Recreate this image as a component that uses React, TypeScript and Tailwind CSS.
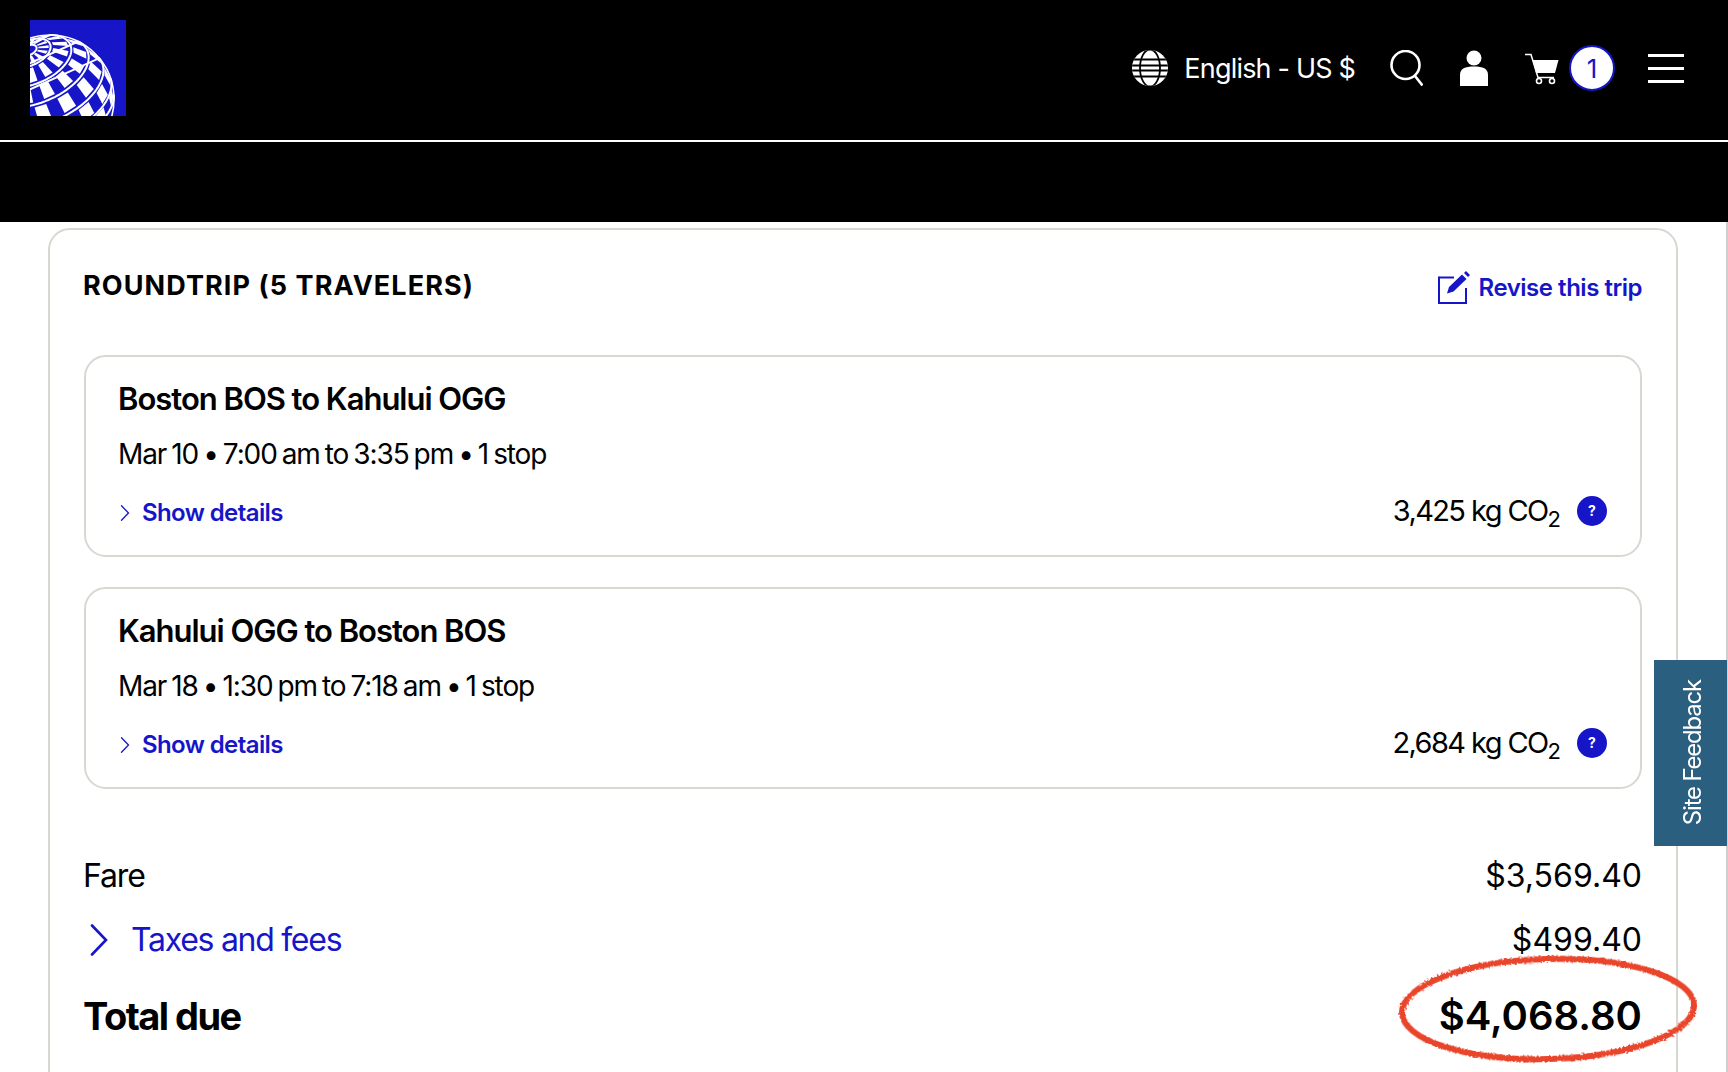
import type { ReactNode } from "react";

const FONT = "font-['Inter','Liberation_Sans',sans-serif]";

// The globe mark: an orthographic grid seen from a tilted pole, clipped by the square.
const CX = 20;
const CY = 79;
const R = 64;
const POLE: [number, number, number] = [-22 / 64, -49 / 64, Math.sqrt(1 - (22 * 22 + 49 * 49) / (64 * 64))];
const U: [number, number, number] = [0.912, -0.41, 0];
const V: [number, number, number] = [
  POLE[1] * U[2] - POLE[2] * U[1],
  POLE[2] * U[0] - POLE[0] * U[2],
  POLE[0] * U[1] - POLE[1] * U[0],
];

function project(theta: number, phi: number) {
  const s = Math.sin(theta);
  const c = Math.cos(theta);
  const x = c * POLE[0] + s * (Math.cos(phi) * U[0] + Math.sin(phi) * V[0]);
  const y = c * POLE[1] + s * (Math.cos(phi) * U[1] + Math.sin(phi) * V[1]);
  const z = c * POLE[2] + s * (Math.cos(phi) * U[2] + Math.sin(phi) * V[2]);
  return { x: CX + x * R, y: CY + y * R, z };
}

const RINGS = [0.14, 0.36, 0.69, 1.0, 1.34, 1.64, 1.86];
const SEGMENTS = 28;

const cells: string[] = [];
RINGS.slice(0, -1).forEach((top, i) => {
  const gap = (RINGS[i + 1] - top) * 0.13;
  for (let j = 0; j < SEGMENTS; j++) {
    if ((i + j) % 2) continue;
    const a = (j / SEGMENTS) * Math.PI * 2 + 0.1;
    const b = ((j + 1) / SEGMENTS) * Math.PI * 2 + 0.1;
    const pts = [
      project(top + gap, a),
      project(top + gap, b),
      project(RINGS[i + 1] - gap, b),
      project(RINGS[i + 1] - gap, a),
    ];
    if (pts.some((p) => p.z < 0)) continue;
    cells.push(pts.map((p) => `${p.x.toFixed(1)},${p.y.toFixed(1)}`).join(" "));
  }
});

const rings = RINGS.map((theta) => {
  const pts: string[] = [];
  for (let k = 0; k <= 180; k++) {
    const p = project(theta, (k / 180) * Math.PI * 2);
    if (p.z >= 0) pts.push(`${p.x.toFixed(1)},${p.y.toFixed(1)}`);
  }
  return pts.join(" ");
});

function Logo() {
  return (
    <svg viewBox="0 0 96 96" className="h-24 w-24 shrink-0 bg-[#1616c8]">
      <g fill="#fff">
        {cells.map((c) => (
          <polygon key={c} points={c} />
        ))}
      </g>
      <g fill="none" stroke="#fff" strokeWidth="2">
        {rings.map((r) => (
          <polyline key={r} points={r} />
        ))}
        <circle cx={CX} cy={CY} r={R} strokeWidth="1.6" />
      </g>
    </svg>
  );
}

function GlobeIcon() {
  return (
    <svg viewBox="0 0 36 36" className="h-9 w-9 shrink-0">
      <defs>
        <clipPath id="globe-clip">
          <circle cx="18" cy="18" r="18" />
        </clipPath>
      </defs>
      <g clipPath="url(#globe-clip)">
        <rect x="0" y="0" width="36" height="36" fill="#fff" />
        <path d="M0 9.500h36M0 15.500h36M0 20.500h36M0 26.500h36" stroke="#000" strokeWidth="2" />
        <ellipse cx="18" cy="18" rx="10" ry="18.500" fill="none" stroke="#000" strokeWidth="1.8" />
      </g>
    </svg>
  );
}

function SearchIcon() {
  return (
    <svg viewBox="0 0 33 36" className="h-9 w-[33px] shrink-0" fill="none" stroke="#fff" strokeWidth="2.6">
      <circle cx="15.500" cy="15" r="14" />
      <path d="M25 26l7.500 9.500" />
    </svg>
  );
}

function UserIcon() {
  return (
    <svg viewBox="0 0 28 36" className="h-9 w-7 shrink-0" fill="#fff">
      <circle cx="14" cy="8" r="7.500" />
      <path d="M0 36V25c0-6.500 5-8.500 14-8.500S28 18.500 28 25v11z" />
    </svg>
  );
}

function CartIcon() {
  return (
    <svg viewBox="0 0 35 36" className="h-9 w-[35px] shrink-0">
      <path d="M1 4.500h6L14 27.500h16" fill="none" stroke="#fff" strokeWidth="1.500" />
      <path d="M8.500 10H34.500l-3.500 13H12z" fill="#fff" />
      <circle cx="15" cy="31" r="2.500" fill="none" stroke="#fff" strokeWidth="1.600" />
      <circle cx="28" cy="31" r="2.500" fill="none" stroke="#fff" strokeWidth="1.600" />
    </svg>
  );
}

function EditIcon() {
  return (
    <svg viewBox="0 0 32 33" className="h-[33px] w-8 shrink-0 text-[#1616c8]" fill="currentColor">
      <path d="M1.500 6.500h14.500" fill="none" stroke="currentColor" strokeWidth="2" />
      <path d="M1 5.500V32h27V17" fill="none" stroke="currentColor" strokeWidth="2" />
      <path d="M11 16L24 3.500l4.500 4.500L15.500 20.500l-6.500 2z" />
      <path d="M26 2l2-2 4 4-2 2z" />
    </svg>
  );
}

function Chevron({ className }: { className: string }) {
  return (
    <svg viewBox="0 0 18 32" className={className} fill="none" stroke="currentColor" strokeWidth="2.600" strokeLinecap="round">
      <path d="M2 1.500L16 16 2 30.500" />
    </svg>
  );
}

function HelpBadge() {
  return (
    <span className="flex h-[30px] w-[30px] items-center justify-center rounded-full bg-[#1616c8] text-sm font-bold text-white">
      ?
    </span>
  );
}

function Co2({ value }: { value: string }) {
  return (
    <div className="-mt-[2px] flex items-center gap-[16px]">
      <span className="text-[29px] leading-[36px] tracking-[-0.055em] text-black">
        {value} kg CO<sub className="text-[22px] leading-none tracking-normal">2</sub>
      </span>
      <HelpBadge />
    </div>
  );
}

function FlightCard({ title, when, co2 }: { title: string; when: string; co2: string }) {
  return (
    <div className="rounded-[22px] border-2 border-[#d8d8d2] pt-[23px] pr-[33px] pb-[24px] pl-[32px]">
      <h3 className="text-[31px] leading-[38px] font-semibold tracking-[-0.033em] text-black">{title}</h3>
      <p className="mt-[18px] text-[28px] leading-[36px] tracking-[-0.04em] [word-spacing:-0.06em] text-black">{when}</p>
      <div className="mt-[23px] flex h-9 items-start justify-between">
        <a className="mt-[2px] flex items-center gap-[12px] pl-[2px] text-[24px] leading-[32px] font-semibold tracking-[-0.025em] text-[#1616c8]">
          <Chevron className="h-4 w-[10px]" />
          Show details
        </a>
        <Co2 value={co2} />
      </div>
    </div>
  );
}

function PriceRow({ left, right, className }: { left: ReactNode; right: string; className: string }) {
  return (
    <div className={`flex items-center justify-between ${className}`}>
      {left}
      <span className="tracking-normal">{right}</span>
    </div>
  );
}

export default function App() {
  return (
    <div className={`relative h-[1072px] overflow-hidden bg-white ${FONT}`}>
      <header className="flex h-[142px] items-start justify-between border-b-2 border-white bg-black pt-5 pr-[44px] pl-[30px]">
        <Logo />
        <div className="mt-[25px] flex items-center">
          <GlobeIcon />
          <span className="mt-[2px] ml-[16px] text-[27px] leading-9 tracking-[-0.03em] text-white">English - US $</span>
          <span className="ml-[35px]"><SearchIcon /></span>
          <span className="ml-[37px]"><UserIcon /></span>
          <span className="ml-[36px]"><CartIcon /></span>
          <span className="ml-[10px] flex h-[46px] w-[46px] items-center justify-center rounded-full border-2 border-[#1616c8] bg-white text-[26px] text-[#1616c8]">
            1
          </span>
          <span className="ml-[33px] flex w-9 flex-col gap-[10px]">
            <span className="h-[3px] bg-white" />
            <span className="h-[3px] bg-white" />
            <span className="h-[3px] bg-white" />
          </span>
        </div>
      </header>
      <div className="h-20 bg-black" />

      <main className="h-[850px] border-r-2 border-[#cfcfcf] pt-[6px] pr-[48px] pl-[48px]">
        <section className="h-[900px] rounded-[22px] border-2 border-[#d8d8d2] pt-[36px] pr-[34px] pl-[33px]">
          <div className="flex items-center justify-between">
            <h2 className="text-[27px] leading-[40px] font-bold tracking-[0.04em] text-black">ROUNDTRIP (5 TRAVELERS)</h2>
            <a className="mt-[3px] flex items-center gap-[9px] text-[24px] font-semibold tracking-[-0.02em] text-[#1616c8]">
              <EditIcon />
              Revise this trip
            </a>
          </div>

          <div className="mt-[49px] flex flex-col gap-[30px] pl-[1px]">
            <FlightCard title="Boston BOS to Kahului OGG" when="Mar 10 • 7:00 am to 3:35 pm • 1 stop" co2="3,425" />
            <FlightCard title="Kahului OGG to Boston BOS" when="Mar 18 • 1:30 pm to 7:18 am • 1 stop" co2="2,684" />
          </div>

          <PriceRow
            className="mt-[67px] text-[32px] leading-[40px] text-black"
            left={<span className="tracking-[-0.035em]">Fare</span>}
            right="$3,569.40"
          />
          <PriceRow
            className="mt-[24px] text-[32px] leading-[40px] text-black"
            left={
              <a className="flex items-center gap-[23px] pl-[7px] text-[#1616c8]">
                <Chevron className="h-8 w-[18px]" />
                <span className="tracking-[-0.04em]">Taxes and fees</span>
              </a>
            }
            right="$499.40"
          />
          <PriceRow
            className="mt-[32px] text-[40px] leading-[48px] font-semibold text-black"
            left={<span className="text-[38px] font-bold tracking-[-0.04em]">Total due</span>}
            right="$4,068.80"
          />
        </section>
      </main>

      <button className="absolute top-[660px] right-[1px] flex h-[186px] w-[73px] items-center justify-center bg-[#2a5f7f] pl-[4px] text-[24px] tracking-[-0.05em] text-white">
        <span className="rotate-180 [writing-mode:vertical-rl]">Site Feedback</span>
      </button>

      {/* hand drawn ring over the total */}
      <svg viewBox="0 0 320 120" className="absolute top-[949px] left-[1388px] h-[120px] w-[320px]" fill="none">
        <defs>
          <filter id="rough" x="-5%" y="-10%" width="110%" height="120%">
            <feTurbulence type="fractalNoise" baseFrequency="0.5" numOctaves="2" seed="3" />
            <feDisplacementMap in="SourceGraphic" scale="4" />
          </filter>
        </defs>
        <ellipse cx="160" cy="60" rx="146" ry="50" stroke="#e8442a" strokeWidth="6" filter="url(#rough)" transform="rotate(-1.500 160 60)" />
      </svg>
    </div>
  );
}
